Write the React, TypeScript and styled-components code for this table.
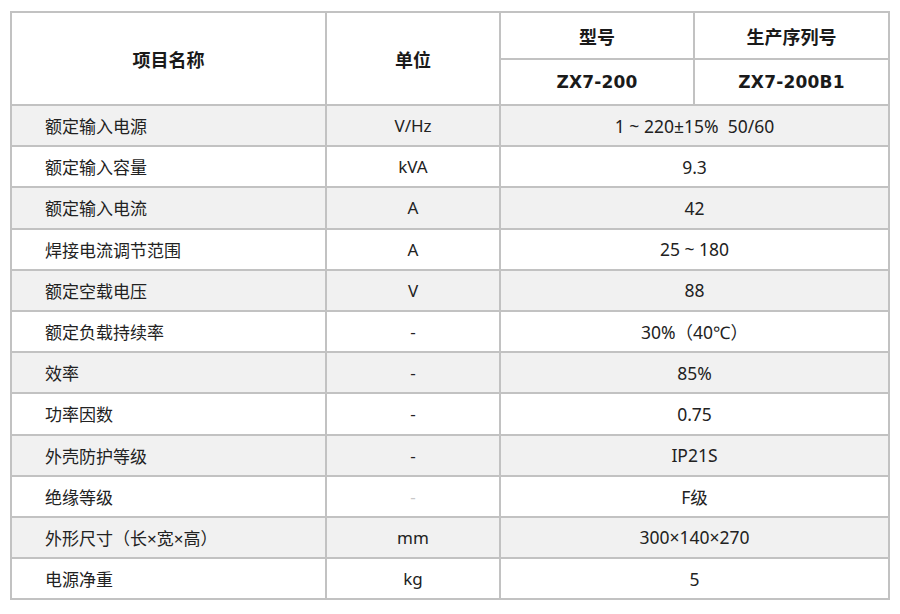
import React from 'react';
import styled, { createGlobalStyle } from 'styled-components';

const GlobalStyle = createGlobalStyle`
  html, body {
    margin: 0;
    padding: 0;
    background: #fff;
  }
  body {
    font-family: "Noto Sans", "Noto Sans CJK SC", sans-serif;
    color: #222;
  }
`;

const Page = styled.div`
  width: 900px;
  height: 614px;
  padding: 11px 0 0 10px;
  box-sizing: border-box;
`;

const SpecTable = styled.table`
  width: 878px;
  border-collapse: collapse;
  table-layout: fixed;
  border: 2px solid #c2c2c2;
`;

const HeadCell = styled.th<{ $h: number }>`
  height: ${(p) => p.$h}px;
  padding: 0;
  border: 2px solid #c2c2c2;
  font-size: 18px;
  font-weight: 700;
  color: #1a1a1a;
  text-align: center;
  vertical-align: middle;
  background: #fff;
`;

const ModelCell = styled(HeadCell)`
  font-family: "DejaVu Sans", "Noto Sans CJK SC", sans-serif;
  font-size: 17px;
  letter-spacing: 0.2px;
`;

const Row = styled.tr<{ $shade: boolean }>`
  height: 41.2px;
  background: ${(p) => (p.$shade ? '#f1f1f1' : '#fff')};
`;

const NameCell = styled.td`
  padding: 0 0 0 33px;
  border: 2px solid #c2c2c2;
  font-size: 17px;
  color: #222;
  text-align: left;
  vertical-align: middle;
`;

const UnitCell = styled.td<{ $faint?: boolean }>`
  padding: 0;
  border: 2px solid #c2c2c2;
  font-size: 17px;
  color: ${(p) => (p.$faint ? '#c8c8c8' : '#222')};
  text-align: center;
  vertical-align: middle;
`;

const ValueCell = styled.td`
  padding: 0;
  border: 2px solid #c2c2c2;
  font-size: 17.5px;
  color: #222;
  text-align: center;
  vertical-align: middle;
  white-space: pre;
`;

type Spec = { name: string; unit: string; value: string; faint?: boolean };

const specs: Spec[] = [
  { name: '额定输入电源', unit: 'V/Hz', value: '1 ~ 220±15%  50/60' },
  { name: '额定输入容量', unit: 'kVA', value: '9.3' },
  { name: '额定输入电流', unit: 'A', value: '42' },
  { name: '焊接电流调节范围', unit: 'A', value: '25 ~ 180' },
  { name: '额定空载电压', unit: 'V', value: '88' },
  { name: '额定负载持续率', unit: '-', value: '30%（40℃）' },
  { name: '效率', unit: '-', value: '85%' },
  { name: '功率因数', unit: '-', value: '0.75' },
  { name: '外壳防护等级', unit: '-', value: 'IP21S' },
  { name: '绝缘等级', unit: '-', value: 'F级', faint: true },
  { name: '外形尺寸（长×宽×高）', unit: 'mm', value: '300×140×270' },
  { name: '电源净重', unit: 'kg', value: '5' },
];

const App: React.FC = () => (
  <Page>
    <GlobalStyle />
    <SpecTable>
      <colgroup>
        <col style={{ width: 315 }} />
        <col style={{ width: 174 }} />
        <col style={{ width: 194 }} />
        <col style={{ width: 195 }} />
      </colgroup>
      <thead>
        <tr>
          <HeadCell $h={45} rowSpan={2}>项目名称</HeadCell>
          <HeadCell $h={45} rowSpan={2}>单位</HeadCell>
          <HeadCell $h={45}>型号</HeadCell>
          <HeadCell $h={45}>生产序列号</HeadCell>
        </tr>
        <tr>
          <ModelCell $h={44}>ZX7-200</ModelCell>
          <ModelCell $h={44}>ZX7-200B1</ModelCell>
        </tr>
      </thead>
      <tbody>
        {specs.map((s, i) => (
          <Row key={s.name} $shade={i % 2 === 0}>
            <NameCell>{s.name}</NameCell>
            <UnitCell $faint={s.faint}>{s.unit}</UnitCell>
            <ValueCell colSpan={2}>{s.value}</ValueCell>
          </Row>
        ))}
      </tbody>
    </SpecTable>
  </Page>
);

export default App;
